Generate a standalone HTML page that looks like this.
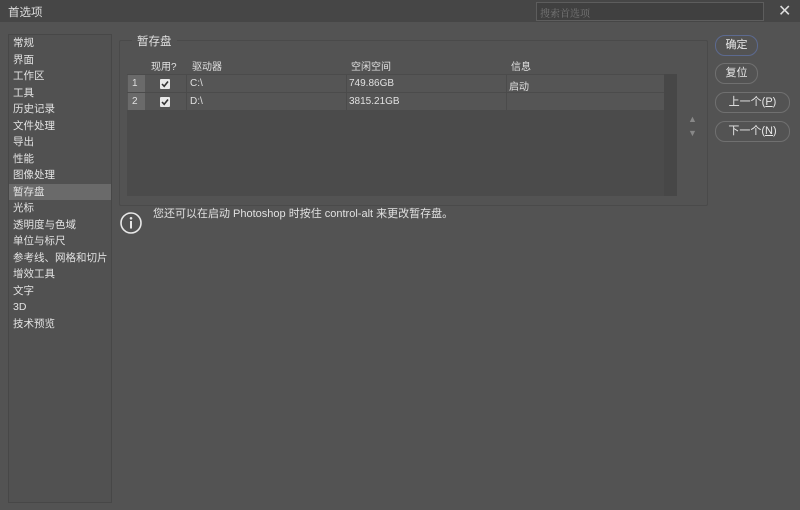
<!DOCTYPE html>
<html><head><meta charset="utf-8"><style>
*{margin:0;padding:0;box-sizing:border-box}
body{width:800px;height:510px;background:#535353;font-family:"Liberation Sans","Noto Sans CJK SC",sans-serif;font-size:11px;color:#e0e0e0;position:relative;overflow:hidden}
.a{position:absolute}
.title{left:0;top:0;width:800px;height:22px;background:#464646}
.left{left:8px;top:34px;width:104px;height:469px;border:1px solid #474747;background:#515151}
.left div{height:16.5px;line-height:16.5px;padding-left:4px;font-size:10.5px;color:#e2e2e2}
.left .sel{background:#6a6a6a}
.grp{left:119px;top:40px;width:589px;height:166px;border:1px solid #4a4a4a;border-radius:2px}
.tbl{left:127px;top:74px;width:550px;height:122px;background:#4b4b4b}
.row{position:absolute;left:0;width:537px;height:17px;background:#555555}
.row span{position:absolute;top:3px;font-size:10px}
.btn{position:absolute;border:1px solid #707070;border-radius:10px;height:21px;text-align:center;line-height:19px;font-size:11px;color:#e8e8e8}
.cb{position:absolute;left:33px;top:4px;width:10px;height:10px;background:#e8e8e8;border-radius:1px}
</style></head><body>
<div class="a title"></div>
<div class="a" style="left:8px;top:4px;font-size:11.5px;color:#ddd">首选项</div>
<div class="a" style="left:536px;top:2px;width:228px;height:19px;border:1px solid #5d5d5d;background:#404040;font-family:'Noto Serif CJK SC',serif;font-size:10px;color:#777;padding:2px 3px">搜索首选项</div>
<div class="a" style="left:778px;top:1px;font-size:16px;color:#ddd">✕</div>
<div class="a left">
<div>常规</div><div>界面</div><div>工作区</div><div>工具</div><div>历史记录</div><div>文件处理</div><div>导出</div><div>性能</div><div>图像处理</div><div class="sel">暂存盘</div><div>光标</div><div>透明度与色域</div><div>单位与标尺</div><div>参考线、网格和切片</div><div>增效工具</div><div>文字</div><div>3D</div><div>技术预览</div>
</div>
<div class="a grp"></div>
<div class="a" style="left:132px;top:33px;background:#535353;padding:0 5px;font-size:11.5px">暂存盘</div>
<div class="a" style="left:151px;top:58px;font-size:10px">现用?</div>
<div class="a" style="left:192px;top:58px;font-size:10px">驱动器</div>
<div class="a" style="left:351px;top:58px;font-size:10px">空闲空间</div>
<div class="a" style="left:511px;top:58px;font-size:10px">信息</div>
<div class="a tbl">
<div class="row" style="top:1px"><div style="position:absolute;left:1px;top:0;width:17px;height:17px;background:#6a6a6a"></div><span style="left:5px">1</span><div class="cb"><svg width="10" height="10" viewBox="0 0 10 10"><path d="M2 5 L4.2 7.3 L8 2.5" stroke="#333" stroke-width="1.6" fill="none"/></svg></div><span style="left:63px">C:\</span><span style="left:222px">749.86GB</span><span style="left:382px">启动</span>
<div style="position:absolute;left:59px;top:0;width:1px;height:17px;background:#4b4b4b"></div><div style="position:absolute;left:219px;top:0;width:1px;height:17px;background:#4b4b4b"></div><div style="position:absolute;left:379px;top:0;width:1px;height:17px;background:#4b4b4b"></div></div>
<div class="row" style="top:19px"><div style="position:absolute;left:1px;top:0;width:17px;height:17px;background:#6a6a6a"></div><span style="left:5px">2</span><div class="cb"><svg width="10" height="10" viewBox="0 0 10 10"><path d="M2 5 L4.2 7.3 L8 2.5" stroke="#333" stroke-width="1.6" fill="none"/></svg></div><span style="left:63px">D:\</span><span style="left:222px">3815.21GB</span>
<div style="position:absolute;left:59px;top:0;width:1px;height:17px;background:#4b4b4b"></div><div style="position:absolute;left:219px;top:0;width:1px;height:17px;background:#4b4b4b"></div><div style="position:absolute;left:379px;top:0;width:1px;height:17px;background:#4b4b4b"></div></div>
<div style="position:absolute;left:537px;top:0;width:13px;height:122px;background:#474747"></div>
</div>
<div class="a" style="left:688px;top:114px;font-size:9px;color:#888">▲</div>
<div class="a" style="left:688px;top:128px;font-size:9px;color:#888">▼</div>
<svg class="a" style="left:119px;top:211px" width="24" height="24" viewBox="0 0 24 24"><circle cx="12" cy="12" r="10" stroke="#e8e8e8" stroke-width="1.6" fill="none"/><circle cx="12" cy="7.3" r="1.3" fill="#e8e8e8"/><rect x="11" y="10" width="2" height="7.5" fill="#e8e8e8"/></svg>
<div class="a" style="left:153px;top:205px;font-size:11px">您还可以在启动 Photoshop 时按住 control-alt 来更改暂存盘。</div>
<div class="btn" style="left:715px;top:35px;width:43px;border-color:#5c6a90">确定</div>
<div class="btn" style="left:715px;top:63px;width:43px">复位</div>
<div class="btn" style="left:715px;top:92px;width:75px">上一个(<u>P</u>)</div>
<div class="btn" style="left:715px;top:121px;width:75px">下一个(<u>N</u>)</div>
</body></html>
